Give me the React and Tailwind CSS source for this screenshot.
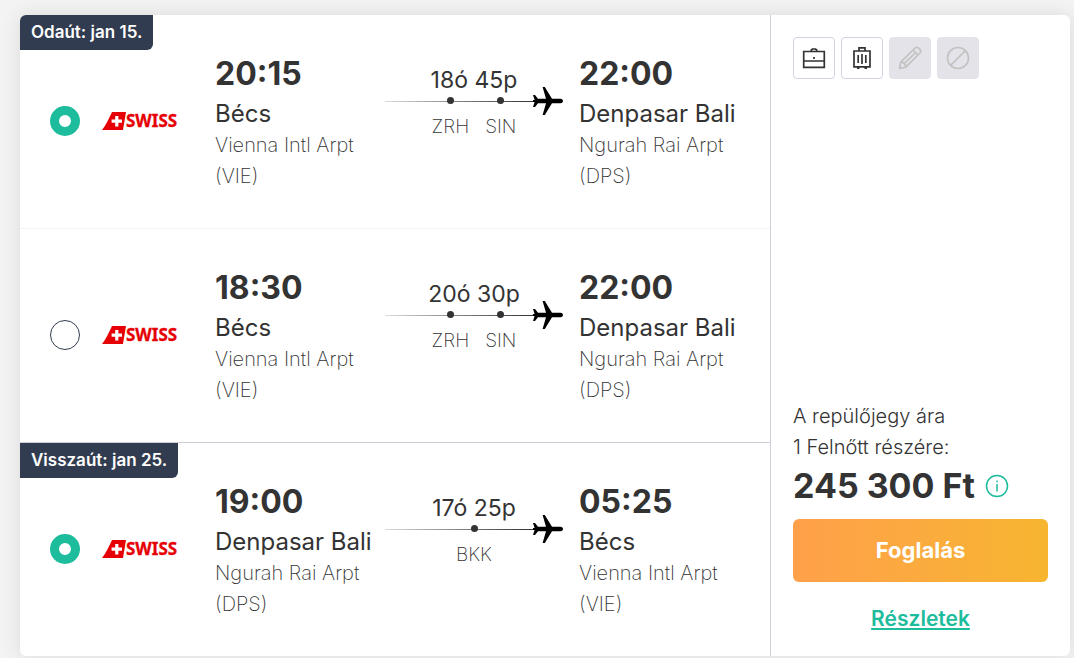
import { useState } from "react";

const flights = [
  {
    id: "out-1", group: "outbound", tag: "Odaút: jan 15.",
    from: { time: "20:15", city: "Bécs", airport: "Vienna Intl Arpt", code: "(VIE)" },
    to: { time: "22:00", city: "Denpasar Bali", airport: "Ngurah Rai Arpt", code: "(DPS)" },
    duration: "18ó 45p", stops: ["ZRH", "SIN"], border: "",
  },
  {
    id: "out-2", group: "outbound", tag: null,
    from: { time: "18:30", city: "Bécs", airport: "Vienna Intl Arpt", code: "(VIE)" },
    to: { time: "22:00", city: "Denpasar Bali", airport: "Ngurah Rai Arpt", code: "(DPS)" },
    duration: "20ó 30p", stops: ["ZRH", "SIN"], border: "border-t border-[#f3f3f5]",
  },
  {
    id: "back-1", group: "inbound", tag: "Visszaút: jan 25.",
    from: { time: "19:00", city: "Denpasar Bali", airport: "Ngurah Rai Arpt", code: "(DPS)" },
    to: { time: "05:25", city: "Bécs", airport: "Vienna Intl Arpt", code: "(VIE)" },
    duration: "17ó 25p", stops: ["BKK"], border: "border-t border-[#d0cdd8]",
  },
];

function SwissLogo() {
  return (
    <svg viewBox="0 0 80 30" className="h-[30px] w-20 shrink-0" role="img" aria-label="SWISS">
      <path d="M0 24 C4 19 7 12 10 6 H24 C23 12 22 18 21 24 Z" fill="#e60005" />
      <path d="M13.200 10h3.200v3.600H20v3.200h-3.600v3.600h-3.200v-3.600H9.600v-3.200h3.600z" fill="#fff" />
      <text x="24" y="21" fontSize="17" fontWeight="700" fill="#e60005" stroke="#e60005" strokeWidth="0.300" className="font-['Noto_Sans',sans-serif]">SWISS</text>
    </svg>
  );
}

function Plane() {
  return (
    <svg viewBox="0 0 30 30" className="size-[30px] shrink-0" aria-hidden="true">
      <path d="M9.600 1 H11.800 L19 12.800 H27.500 C30.800 13.200 30.800 16.800 27.500 17.200 H19 L11.800 29 H9.600 L13 17.200 H5 L2 21 H0 L1.600 16 H0 V14 H1.600 L0 9 H2 L5 12.800 H13 Z" fill="#000" />
    </svg>
  );
}

function Endpoint({ time, city, airport, code, width }) {
  return (
    <div className={width}>
      <div className="text-[32px] leading-[48px] font-bold">{time}</div>
      <div className="text-2xl leading-8 whitespace-nowrap">{city}</div>
      <div className="text-xl leading-[31px] font-extralight whitespace-nowrap">{airport}</div>
      <div className="text-xl leading-[31px] font-extralight">{code}</div>
    </div>
  );
}

function Route({ duration, stops }) {
  return (
    <div className="w-[178px] shrink-0 self-start pt-[15px] text-center">
      <div className="text-[23px] leading-[30px]">{duration}</div>
      <div className="grid">
        <div className="col-start-1 row-start-1 -mt-[9px] flex items-center self-start">
          <div className="h-px flex-1 bg-linear-to-r from-[#ddd] to-[#333]" />
          <Plane />
        </div>
        <div className="col-start-1 row-start-1 flex justify-center gap-4">
          {stops.map((s) => (
            <div key={s} className="flex flex-col items-center gap-2 pt-[2px]">
              <span className="size-[7px] rounded-full bg-[#333]" />
              <span className="text-[19px] leading-[30px] font-extralight">{s}</span>
            </div>
          ))}
        </div>
      </div>
    </div>
  );
}

function FlightRow({ flight, checked, onChange }) {
  return (
    <article className={`relative flex flex-1 items-center pl-[30px] ${flight.border}`}>
      {flight.tag && (
        <h2 className="absolute top-0 left-0 rounded-br-md bg-[#323c50] px-[11px] text-[17px] leading-[35px] font-semibold text-white">
          {flight.tag}
        </h2>
      )}
      <label className="flex shrink-0 cursor-pointer items-center gap-[22px] pb-[2px]">
        <input
          type="radio"
          name={flight.group}
          aria-label={`${flight.from.time} ${flight.from.city}`}
          checked={checked}
          onChange={onChange}
          className="size-[30px] appearance-none rounded-full border border-[#323c50] bg-white checked:border-[9px] checked:border-[#1cbc9c]"
        />
        <SwissLogo />
      </label>
      <div className="flex items-center pt-[35px] pb-9 pl-[33px]">
        <Endpoint {...flight.from} width="w-[170px]" />
        <Route duration={flight.duration} stops={flight.stops} />
        <Endpoint {...flight.to} width="pl-4" />
      </div>
    </article>
  );
}

function BriefcaseIcon() {
  return (
    <svg viewBox="0 0 24 24" className="size-6" fill="none" stroke="#333" strokeWidth="1.700">
      <path d="M1.700 5.500H22.300V21.300H1.700ZM1.700 15H22.300M9.300 5.500V4L10.500 3H13.500L14.700 4V5.500M12 11V13" />
    </svg>
  );
}

function SuitcaseIcon() {
  return (
    <svg viewBox="0 0 24 24" className="size-6" fill="none" stroke="#333" strokeWidth="1.700">
      <path d="M4 5H20V20.800H4ZM9 5V1.800H15V5M8.200 9V17M12 8V18M15.800 9V17M7 22.200H9.500M14.500 22.200H17" />
    </svg>
  );
}

function PencilIcon() {
  return (
    <svg viewBox="0 0 24 24" className="size-6" fill="none" stroke="#c2c2c2" strokeWidth="1.700" strokeLinejoin="round">
      <path d="M1.500 22.500 2.800 16.200 17 2C20 0 24 4 22 7L7.800 21.200ZM2.800 16.200C5.500 16 8 18.500 7.800 21.200M15 4 20 9M17.800 6.500 5.800 17.800M2 21 3 22" />
    </svg>
  );
}

function NoneIcon() {
  return (
    <svg viewBox="0 0 24 24" className="size-6" fill="none" stroke="#c2c2c2" strokeWidth="1.600">
      <circle cx="12" cy="12" r="10.500" />
      <path d="M4.600 19.400 19.400 4.600" />
    </svg>
  );
}

const options = [
  { label: "Kézipoggyász", Icon: BriefcaseIcon, disabled: false },
  { label: "Feladott poggyász", Icon: SuitcaseIcon, disabled: false },
  { label: "Módosítás", Icon: PencilIcon, disabled: true },
  { label: "Lemondás", Icon: NoneIcon, disabled: true },
];

export default function App() {
  const [selected, setSelected] = useState({ outbound: "out-1", inbound: "back-1" });
  return (
    <main className="min-h-screen bg-[#f3f3f3] pt-[15px] pr-1 pb-[2px] pl-5 font-['Inter',sans-serif] text-[#333]">
      <div className="flex overflow-hidden rounded-md bg-white shadow-[0_0_20px_rgba(0,0,0,0.1)]">
        <section className="flex flex-1 flex-col">
          {flights.map((f) => (
            <FlightRow
              key={f.id}
              flight={f}
              checked={selected[f.group] === f.id}
              onChange={() => setSelected({ ...selected, [f.group]: f.id })}
            />
          ))}
        </section>
        <aside className="flex w-[300px] shrink-0 flex-col justify-between border-l border-[#d0cdd8] p-[22px]">
          <div className="flex gap-[6px]">
            {options.map(({ label, Icon, disabled }) => (
              <button
                key={label}
                type="button"
                aria-label={label}
                disabled={disabled}
                className="flex size-[42px] items-center justify-center rounded border border-[#d4d2df] bg-white disabled:border-[#e4e3e9] disabled:bg-[#e4e3e9]"
              >
                <Icon />
              </button>
            ))}
          </div>
          <div className="flex flex-col">
            <p className="text-[20px] leading-[31px] font-light">A repülőjegy ára</p>
            <p className="text-[20px] leading-[31px] font-light">1 Felnőtt részére:</p>
            <div className="flex items-center gap-[10px]">
              <strong className="text-[34px] leading-[46px] font-bold whitespace-nowrap">245 300 Ft</strong>
              <button type="button" aria-label="Információ">
                <svg viewBox="0 0 24 24" className="size-6" fill="none" stroke="#1cbc9c" strokeWidth="1.500">
                  <circle cx="12" cy="12" r="10.500" />
                  <path d="M12 10V17.500M12 6.500V8.300" />
                </svg>
              </button>
            </div>
            <button type="button" className="mt-[10px] h-[63px] rounded-md bg-linear-to-r from-[#ffa04a] to-[#f7b52f] text-[22px] font-bold text-white">
              Foglalás
            </button>
            <a href="#details" className="mt-[22px] self-center text-[21px] leading-[30px] font-semibold text-[#1cbc9c] underline">
              Részletek
            </a>
          </div>
        </aside>
      </div>
    </main>
  );
}
